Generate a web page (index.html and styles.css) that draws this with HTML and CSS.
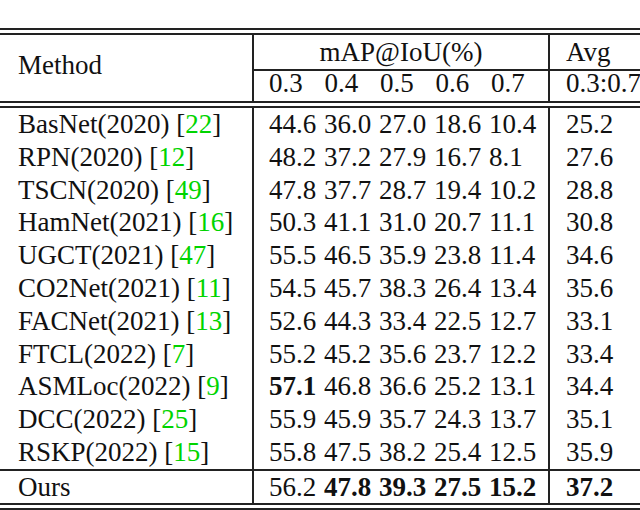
FILE: index.html
```html
<!DOCTYPE html>
<html lang="en">

<head>
    <meta name="viewport" content="width=device-width, initial-scale=1">
    <meta charset="UTF-8">
    <title>Comparison on THUMOS14</title>

    <link rel="stylesheet" href="styles.css">
</head>

<body>
    <table class="results">
        <colgroup>
            <col class="col-method">
            <col class="col-map">
            <col class="col-avg">
        </colgroup>

        <tr class="rule"><td colspan="3"></td></tr>

        <tr class="head">
            <th class="method" rowspan="2">Method</th>
            <th class="map group">mAP@IoU(%)</th>
            <th class="avg group">Avg</th>
        </tr>
        <tr class="head sub">
            <th class="map thresholds">0.3 0.4 0.5 0.6 0.7</th>
            <th class="avg">0.3:0.7</th>
        </tr>

        <tr class="rule"><td colspan="3"></td></tr>

        <tr class="row">
            <td class="method">BasNet(2020) [<span class="ref">22</span>]</td>
            <td class="map">44.6 36.0 27.0 18.6 10.4</td>
            <td class="avg">25.2</td>
        </tr>
        <tr class="row">
            <td class="method">RPN(2020) [<span class="ref">12</span>]</td>
            <td class="map">48.2 37.2 27.9 16.7 8.1</td>
            <td class="avg">27.6</td>
        </tr>
        <tr class="row">
            <td class="method">TSCN(2020) [<span class="ref">49</span>]</td>
            <td class="map">47.8 37.7 28.7 19.4 10.2</td>
            <td class="avg">28.8</td>
        </tr>
        <tr class="row">
            <td class="method">HamNet(2021) [<span class="ref">16</span>]</td>
            <td class="map">50.3 41.1 31.0 20.7 11.1</td>
            <td class="avg">30.8</td>
        </tr>
        <tr class="row">
            <td class="method">UGCT(2021) [<span class="ref">47</span>]</td>
            <td class="map">55.5 46.5 35.9 23.8 11.4</td>
            <td class="avg">34.6</td>
        </tr>
        <tr class="row">
            <td class="method">CO2Net(2021) [<span class="ref">11</span>]</td>
            <td class="map">54.5 45.7 38.3 26.4 13.4</td>
            <td class="avg">35.6</td>
        </tr>
        <tr class="row">
            <td class="method">FACNet(2021) [<span class="ref">13</span>]</td>
            <td class="map">52.6 44.3 33.4 22.5 12.7</td>
            <td class="avg">33.1</td>
        </tr>
        <tr class="row">
            <td class="method">FTCL(2022) [<span class="ref">7</span>]</td>
            <td class="map">55.2 45.2 35.6 23.7 12.2</td>
            <td class="avg">33.4</td>
        </tr>
        <tr class="row">
            <td class="method">ASMLoc(2022) [<span class="ref">9</span>]</td>
            <td class="map"><b>57.1</b> 46.8 36.6 25.2 13.1</td>
            <td class="avg">34.4</td>
        </tr>
        <tr class="row">
            <td class="method">DCC(2022) [<span class="ref">25</span>]</td>
            <td class="map">55.9 45.9 35.7 24.3 13.7</td>
            <td class="avg">35.1</td>
        </tr>
        <tr class="row">
            <td class="method">RSKP(2022) [<span class="ref">15</span>]</td>
            <td class="map">55.8 47.5 38.2 25.4 12.5</td>
            <td class="avg">35.9</td>
        </tr>

        <tr class="row ours">
            <td class="method">Ours</td>
            <td class="map">56.2 <b>47.8</b> <b>39.3</b> <b>27.5</b> <b>15.2</b></td>
            <td class="avg"><b>37.2</b></td>
        </tr>

        <tr class="rule"><td colspan="3"></td></tr>
    </table>
</body>

</html>
```

FILE: styles.css
```css
body {
    margin: 0;
    overflow: hidden;
    background: #fff;
    color: #111;
    font: 27px "Liberation Serif", "Times New Roman", serif;
}

.results {
    margin-top: 28px;
    width: 700px;
    table-layout: fixed;
    border-collapse: separate;
    border-spacing: 0;
}

.col-method {
    width: 252px;
}

.col-map {
    width: 296px;
}

.col-avg {
    width: 152px;
}

.results th,
.results td {
    padding: 0;
    font-weight: normal;
    text-align: left;
    vertical-align: middle;
    white-space: nowrap;
}

/* double rules: the vertical lines stop in the gap */
.rule td {
    padding-top: 3px;
    font-size: 0;
    line-height: 0;
    border-top: 2px solid #222;
    border-bottom: 2px solid #222;
}

.method {
    padding-left: 18px !important;
}

.map,
.avg {
    border-left: 2px solid #222;
}

.map {
    padding-left: 15px !important;
}

.avg {
    padding-left: 16px !important;
}

.head th {
    line-height: 34px;
}

.head th.method {
    padding-bottom: 6px !important;
}

.head .group {
    border-bottom: 2px solid #222;
}

.head .group.map {
    text-align: center;
    padding-left: 0 !important;
}

.sub th {
    line-height: 25px;
    padding-bottom: 5px !important;
}

.thresholds {
    word-spacing: 15px;
}

.row td {
    line-height: 32.8px;
}

.row .map {
    word-spacing: 1px;
}

.ours td {
    line-height: 32px;
    border-top: 2px solid #222;
}

.ref {
    color: #00d400;
}

b {
    font-weight: bold;
}
```
